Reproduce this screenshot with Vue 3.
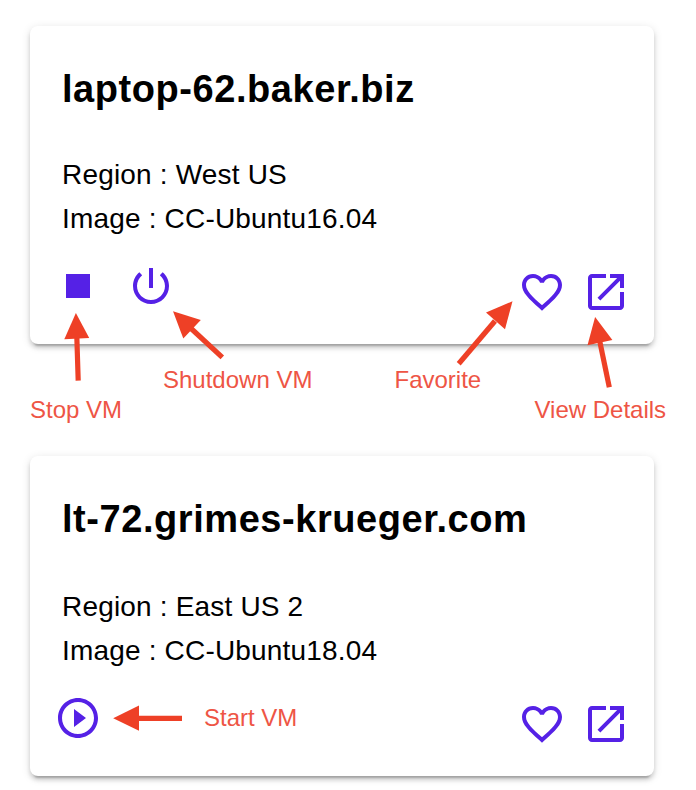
<script setup>
const icons = {
  stop: 'M6 6h12v12H6z',
  power: 'M13 3h-2v10h2V3zm4.83 2.17l-1.42 1.42C17.99 7.86 19 9.81 19 12c0 3.87-3.13 7-7 7s-7-3.13-7-7c0-2.19 1.01-4.14 2.58-5.42L6.17 5.17C4.23 6.82 3 9.26 3 12c0 4.97 4.03 9 9 9s9-4.03 9-9c0-2.74-1.23-5.18-3.17-6.83z',
  play: 'M10 16.5l6-4.5-6-4.5v9zM12 2C6.48 2 2 6.48 2 12s4.48 10 10 10 10-4.48 10-10S17.52 2 12 2zm0 18c-4.41 0-8-3.59-8-8s3.59-8 8-8 8 3.59 8 8-3.59 8-8 8z',
  heart: 'M16.5 3c-1.74 0-3.41.81-4.5 2.09C10.91 3.81 9.24 3 7.5 3 4.42 3 2 5.42 2 8.5c0 3.78 3.4 6.86 8.55 11.54L12 21.35l1.45-1.32C18.6 15.36 22 12.28 22 8.5 22 5.42 19.58 3 16.5 3zm-4.4 15.55l-.1.1-.1-.1C7.14 14.24 4 11.39 4 8.5 4 6.5 5.5 5 7.5 5c1.54 0 3.04.99 3.57 2.36h1.87C13.46 5.99 14.96 5 16.5 5c2 0 3.5 1.5 3.5 3.5 0 2.89-3.14 5.74-7.9 10.05z',
  open: 'M19 19H5V5h7V3H5c-1.11 0-2 .9-2 2v14c0 1.1.89 2 2 2h14c1.1 0 2-.9 2-2v-7h-2v7zM14 3v2h3.59l-9.83 9.83 1.41 1.41L19 6.41V10h2V3h-7z',
}

const machines = [
  { name: 'laptop-62.baker.biz', region: 'West US', image: 'CC-Ubuntu16.04', actions: ['stop', 'power'] },
  { name: 'lt-72.grimes-krueger.com', region: 'East US 2', image: 'CC-Ubuntu18.04', actions: ['play'] },
]

const notes = [
  { text: 'Stop VM', x: 30, y: 418, head: '75.9,313 64.3,339.2 89.2,338', line: [76.8, 336, 78.2, 380.7] },
  { text: 'Shutdown VM', x: 163, y: 388, head: '173,311.2 200.8,320 183.3,338.4', line: [190, 327.5, 222.3, 357.3] },
  { text: 'Favorite', x: 394.5, y: 388, head: '512.5,301.2 486,312.6 505,329.3', line: [495, 321, 458.7, 363.7] },
  { text: 'View Details', x: 534.5, y: 418, head: '595.1,317 587.5,345.3 612.4,339.9', line: [599.5, 340, 609.3, 387.3] },
  { text: 'Start VM', x: 204, y: 726, head: '113.2,718.3 139,705.6 139,730.7', line: [137, 718.4, 182, 718.4] },
]
</script>

<template>
  <main class="page">
    <article v-for="m in machines" :key="m.name" class="card">
      <h2 class="title">{{ m.name }}</h2>
      <div class="facts">
        <p>Region : {{ m.region }}</p>
        <p>Image : {{ m.image }}</p>
      </div>
      <div class="actions">
        <div class="group power">
          <svg v-for="a in m.actions" :key="a" class="icon" viewBox="0 0 24 24"><path :d="icons[a]" /></svg>
        </div>
        <div class="group links">
          <svg v-for="a in ['heart', 'open']" :key="a" class="icon" viewBox="0 0 24 24"><path :d="icons[a]" /></svg>
        </div>
      </div>
    </article>

    <svg class="notes" viewBox="0 0 696 790">
      <g v-for="n in notes" :key="n.text">
        <line :x1="n.line[0]" :y1="n.line[1]" :x2="n.line[2]" :y2="n.line[3]" />
        <polygon :points="n.head" />
        <text :x="n.x" :y="n.y">{{ n.text }}</text>
      </g>
    </svg>
  </main>
</template>

<style>
body {
  margin: 0;
  background: #fff;
}
</style>

<style scoped>
.page {
  position: relative;
  box-sizing: border-box;
  width: 696px;
  height: 790px;
  padding: 26px 42px 14px 30px;
  display: flex;
  flex-direction: column;
  gap: 112px;
  overflow: hidden;
  font-family: "Liberation Sans", Arial, sans-serif;
  color: #000;
}
.card {
  box-sizing: border-box;
  height: 318px;
  padding: 38px 24px 28px;
  display: flex;
  flex-direction: column;
  border-radius: 8px;
  background: #fff;
  box-shadow: 0 6px 2px -4px rgba(0, 0, 0, 0.2), 0 4px 4px 0 rgba(0, 0, 0, 0.14), 0 2px 10px 0 rgba(0, 0, 0, 0.12);
}
.card + .card {
  height: 320px;
}
.title {
  margin: 0 8px auto;
  font-size: 38px;
  line-height: 50px;
  font-weight: 700;
  letter-spacing: 0.56px;
}
.facts {
  margin: 0 8px 21px;
  font-size: 28px;
  line-height: 44px;
  letter-spacing: 0.18px;
}
.facts p {
  margin: 0;
}
.actions {
  display: flex;
  justify-content: space-between;
  align-items: flex-end;
}
.group {
  display: flex;
}
.power {
  gap: 25px;
  padding-bottom: 6px;
}
.links {
  gap: 16px;
}
.icon {
  display: block;
  width: 48px;
  height: 48px;
  fill: #5521e6;
}
.notes {
  position: absolute;
  left: 0;
  top: 0;
  width: 696px;
  height: 790px;
  pointer-events: none;
}
.notes line {
  stroke: #ee4026;
  stroke-width: 5.2;
}
.notes polygon {
  fill: #ee4026;
}
.notes text {
  fill: #ee5545;
  font-size: 24px;
}
</style>
